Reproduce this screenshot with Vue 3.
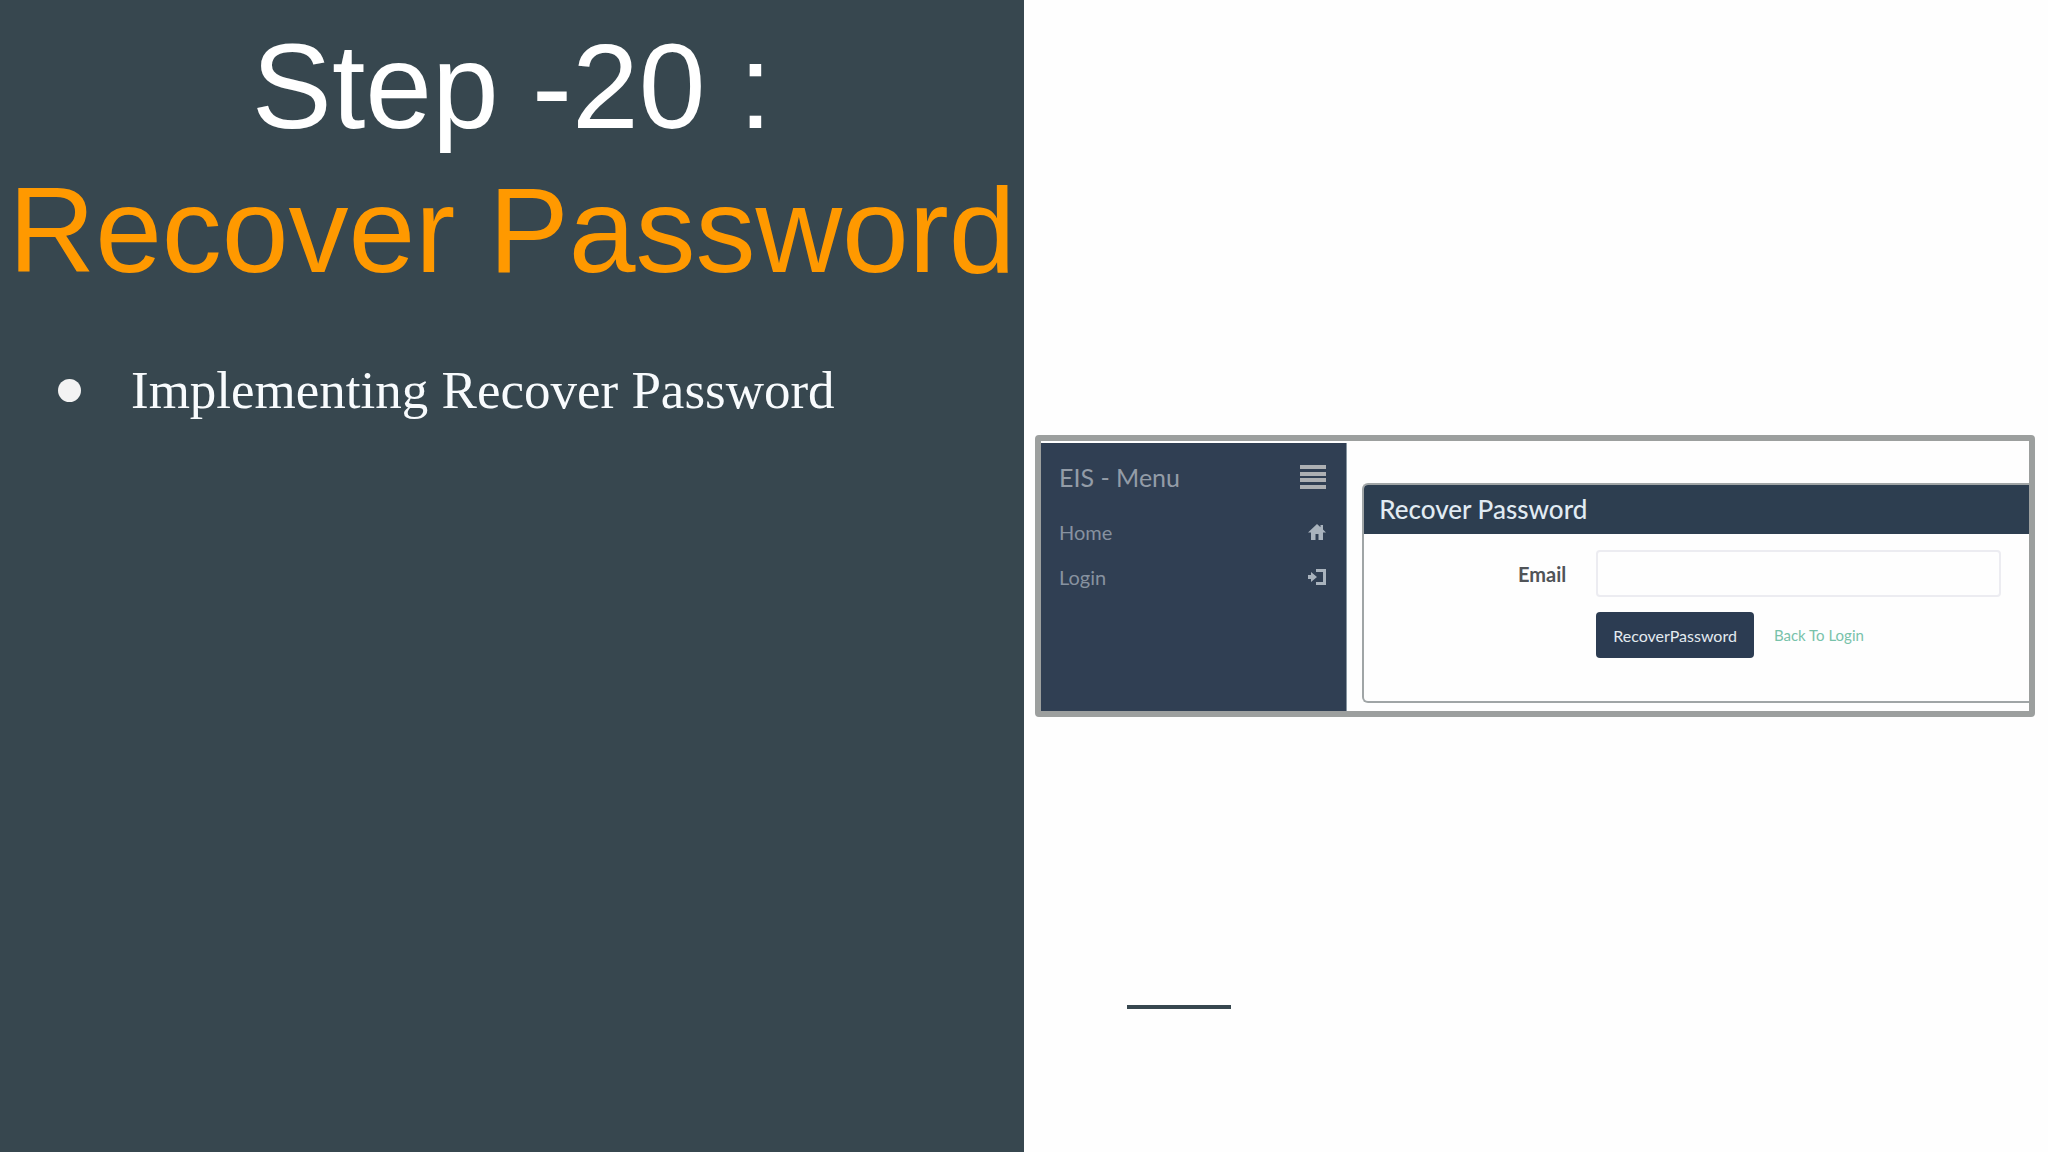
<script setup>
import { ref } from 'vue'

const email = ref('')
const points = ['Implementing Recover Password']
</script>

<template>
  <main class="slide">
    <section class="topic">
      <h1 class="title">
        <span class="step">Step -20 :</span>
        <span class="name">Recover Password</span>
      </h1>
      <ul class="points">
        <li v-for="point in points" :key="point">{{ point }}</li>
      </ul>
    </section>

    <section class="preview">
      <div class="app">
        <nav class="sidebar">
          <div class="menu-head">
            <span>EIS - Menu</span>
            <button type="button" class="toggle" aria-label="Toggle menu">
              <svg width="26" height="24" viewBox="0 0 26 24">
                <path d="M0 0h26v4H0zM0 7h26v4H0zM0 13h26v4H0zM0 20h26v4H0z" />
              </svg>
            </button>
          </div>
          <a href="#home" class="menu-item">
            <span>Home</span>
            <svg width="18" height="18" viewBox="0 0 18 18">
              <path d="M9 1 0 9.500h3V17h4.500v-6h3v6H15V9.500h3L15 6.500V2h-2.500v2.300z" />
            </svg>
          </a>
          <a href="#login" class="menu-item">
            <span>Login</span>
            <svg width="18" height="18" viewBox="0 0 18 18">
              <path d="M0 7h3V4l6 5-6 5v-3H0zM8 1h10v16H8v-3h7V4H8z" />
            </svg>
          </a>
        </nav>

        <div class="content">
          <form class="panel" @submit.prevent>
            <h2 class="panel-title">Recover Password</h2>
            <div class="fields">
              <label for="email">Email</label>
              <input id="email" v-model="email" type="email" />
              <div class="actions">
                <button type="submit" class="submit">RecoverPassword</button>
                <a href="#login" class="back">Back To Login</a>
              </div>
            </div>
          </form>
        </div>
      </div>
      <hr class="rule" />
    </section>
  </main>
</template>

<style>
body {
  margin: 0;
}
</style>

<style scoped>
.slide {
  display: grid;
  grid-template-columns: 1fr 1fr;
  min-height: 100vh;
  background: #fefefe;
}

.topic {
  background: #37474f;
  color: #fff;
}

.title {
  margin: 0;
  padding-top: 14px;
  font: 400 120px/144px "Liberation Sans", Arial, sans-serif;
  text-align: center;
  white-space: nowrap;
}

.title span {
  display: block;
}

.name {
  color: #ff9900;
}

.points {
  margin: 56px 0 0;
  padding: 0 0 0 58px;
  list-style: none;
  font: 400 53px/64px "Liberation Serif", "Times New Roman", serif;
  color: #f8fbfd;
}

.points li {
  display: flex;
  align-items: center;
  gap: 50px;
}

.points li::before {
  content: "";
  width: 23px;
  height: 23px;
  border-radius: 50%;
  background: #f3f3f3;
}

.preview {
  padding: 435px 13px 0 11px;
  font-family: Lato, sans-serif;
}

.app {
  display: flex;
  box-sizing: border-box;
  min-height: 282px;
  border: 6px solid #9c9f9e;
  border-radius: 4px;
  background: #fefefe;
}

.sidebar {
  flex: 0 0 31%;
  box-sizing: border-box;
  margin-top: 2px;
  padding: 14px 20px 0 18px;
  border-right: 1px solid #8796a1;
  background: #303f53;
  color: #939ca7;
}

.menu-head,
.menu-item {
  display: flex;
  align-items: center;
  justify-content: space-between;
}

.menu-head {
  height: 40px;
  margin-bottom: 12px;
  font-size: 25px;
  line-height: 24px;
}

.menu-item {
  height: 45px;
  font-size: 20px;
  color: #8792a0;
  text-decoration: none;
}

.toggle {
  display: flex;
  padding: 0;
  border: 0;
  background: none;
  color: #adb0b3;
}

svg {
  fill: currentColor;
}

.menu-item svg {
  color: #a9b3bd;
}

.content {
  flex: 1;
  padding: 42px 0 8px 15px;
}

.panel {
  box-sizing: border-box;
  height: 100%;
  border: 2px solid #a0a5a6;
  border-right: 0;
  border-radius: 6px 0 0 6px;
  overflow: hidden;
}

.panel-title {
  margin: -1px 0 0 -1px;
  padding-left: 16px;
  background: #2d3e50;
  color: #e1ebf3;
  font-size: 26px;
  font-weight: 500;
  line-height: 50px;
}

.fields {
  display: grid;
  grid-template-columns: 202px 1fr;
  column-gap: 30px;
  row-gap: 15px;
  align-items: center;
  padding: 16px 28px 0 0;
}

label {
  color: #505458;
  font-size: 20px;
  font-weight: 700;
  text-align: right;
}

input {
  box-sizing: border-box;
  width: 100%;
  height: 47px;
  padding: 0 12px;
  border: 2px solid #ececf1;
  border-radius: 4px;
  background: #fefefe;
  font: 400 20px Lato, sans-serif;
}

.actions {
  grid-column: 2;
  display: flex;
  align-items: center;
  gap: 20px;
}

.submit {
  height: 46px;
  padding: 0 17px;
  border: 0;
  border-radius: 4px;
  background: #2c3c52;
  color: #e3eaf0;
  font: 400 16px Lato, sans-serif;
}

.back {
  color: #78c2aa;
  font-size: 15px;
  text-decoration: none;
}

.rule {
  width: 104px;
  height: 4px;
  margin: 288px 0 0 92px;
  border: 0;
  background: #37474f;
}
</style>
